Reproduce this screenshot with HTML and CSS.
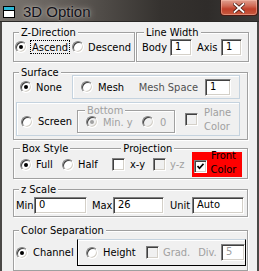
FILE: index.html
```html
<!DOCTYPE html>
<html>
<head>
<meta charset="utf-8">
<title>3D Option</title>
<link rel="stylesheet" href="styles.css">
</head>
<body>
<div class="window">
  <div class="titlebar">
    <svg class="appicon" width="12" height="12" viewBox="0 0 12 12">
      <rect x="0.5" y="0.5" width="11" height="11" fill="#fff" stroke="#000"/>
      <rect x="1" y="1" width="10" height="3" fill="#2bb7d6"/>
      <line x1="1" y1="4.5" x2="11" y2="4.5" stroke="#000"/>
    </svg>
    <span class="title">3D Option</span>
    <div class="close">
      <svg width="12" height="10" viewBox="0 0 12 10">
        <path d="M1.5 1 L10.5 9 M10.5 1 L1.5 9" stroke="#4a1a10" stroke-width="3.4" stroke-linecap="square"/>
        <path d="M1.5 1 L10.5 9 M10.5 1 L1.5 9" stroke="#fff" stroke-width="1.8" stroke-linecap="square"/>
      </svg>
    </div>
  </div>

  <div class="client">
    <div class="toprow">
      <div class="group g-zdir">
        <div class="gtitle">Z-Direction</div>
        <div class="row zrow">
          <span class="radio on"></span><span class="lbl focus">Ascend</span>
          <span class="radio r-desc"></span><span class="lbl l-desc">Descend</span>
        </div>
      </div>
      <div class="group g-line">
        <div class="gtitle t-line">Line Width</div>
        <div class="row lrow">
          <span class="lbl l-body">Body</span><span class="edit e-body">1</span>
          <span class="lbl l-axis">Axis</span><span class="edit e-axis">1</span>
        </div>
      </div>
    </div>

    <div class="group g-surface">
      <div class="gtitle">Surface</div>
      <div class="row srow1">
        <span class="radio on r-none"></span><span class="lbl l-none">None</span>
        <div class="pane mesh">
          <span class="radio"></span><span class="lbl l-mesh">Mesh</span>
          <span class="lbl dim l-space">Mesh Space</span><span class="edit e-space">1</span>
        </div>
      </div>
      <div class="pane screen">
        <span class="radio r-screen"></span><span class="lbl l-screen">Screen</span>
        <div class="group g-bottom">
          <div class="gtitle t-bottom off">Bottom</div>
          <div class="row brow">
            <span class="radio on dis r-min"></span><span class="lbl off l-min">Min. y</span>
            <span class="radio dis r-zero"></span><span class="lbl off l-zero">0</span>
          </div>
        </div>
        <span class="check dis c-plane"></span><span class="lbl off two l-plane">Plane<br>Color</span>
      </div>
    </div>

    <div class="group g-box">
      <div class="titles">
        <div class="gtitle t-box">Box Style</div>
        <div class="gtitle t-proj">Projection</div>
      </div>
      <div class="row boxrow">
        <span class="radio on r-full"></span><span class="lbl l-full">Full</span>
        <span class="radio r-half"></span><span class="lbl l-half">Half</span>
        <span class="check c-xy"></span><span class="lbl l-xy">x-y</span>
        <span class="check dis c-yz"></span><span class="lbl off l-yz">y-z</span>
        <div class="front">
          <span class="check on c-front">
            <svg width="7" height="7" viewBox="0 0 7 7"><path d="M0.5 3 L2.5 5.2 L6.5 0.8" fill="none" stroke="#000" stroke-width="1.7"/></svg>
          </span>
          <span class="lbl two l-front">Front<br>Color</span>
        </div>
      </div>
    </div>

    <div class="group g-z">
      <div class="gtitle">z Scale</div>
      <div class="row zsrow">
        <span class="lbl l-min2">Min</span><span class="edit e-min">0</span>
        <span class="lbl l-max">Max</span><span class="edit e-max">26</span>
        <span class="lbl l-unit">Unit</span><span class="edit e-unit">Auto</span>
      </div>
    </div>

    <div class="group g-sep">
      <div class="gtitle">Color Separation</div>
      <div class="row seprow">
        <span class="radio on r-chan"></span><span class="lbl l-chan">Channel</span>
        <div class="pane height">
          <span class="radio"></span><span class="lbl l-height">Height</span>
          <span class="check dis c-grad"></span><span class="lbl off l-grad">Grad.</span>
          <span class="lbl off l-div">Div.</span><span class="edit off e-div">5</span>
        </div>
      </div>
    </div>
  </div>
</div>
</body>
</html>
```

FILE: styles.css
```css
* { box-sizing: border-box; }
html, body { margin: 0; padding: 0; background: #f0f0f0; }

.window {
  width: 259px;
  height: 271px;
  overflow: hidden;
  background: #f0f0f0;
  font-family: "DejaVu Sans Condensed", "Liberation Sans", Arial, sans-serif;
  font-size: 11px;
  color: #000;
}

/* ---------- title bar ---------- */
.titlebar {
  height: 22px;
  display: flex;
  align-items: flex-start;
  background: linear-gradient(90deg, #7a7570 0%, #6a6560 18%, #4f4b47 40%, #35322f 62%, #2f2c2a 80%, #3c3a38 100%);
  border-bottom: 1px solid #2a2826;
}
.appicon { margin: 6px 0 0 3px; flex: none; }
.title {
  margin: 3px 0 0 8px;
  font-family: "Liberation Sans", Arial, sans-serif;
  font-size: 15px;
  line-height: 18px;
  color: #101018;
  text-shadow: 0 0 6px rgba(230, 225, 215, 0.75), 0 0 2px rgba(230, 225, 215, 0.6);
}
.close {
  margin-left: auto;
  margin-right: 1px;
  width: 38px;
  height: 16px;
  display: flex;
  align-items: center;
  justify-content: center;
  border: 1px solid #4a1a14;
  border-top: none;
  border-radius: 0 0 4px 4px;
  background: linear-gradient(180deg, #e0a090 0%, #d06a55 40%, #c0402a 60%, #c85a40 100%);
  box-shadow: inset 0 0 0 1px rgba(255, 200, 180, 0.45);
}

/* ---------- client ---------- */
.client {
  height: 249px;
  border-left: 2px solid #4a4846;
  border-right: 2px solid #4a4846;
  padding: 10px 0 0 11px;
}

.group {
  border: 1px solid #a0a0a0;
  box-shadow: inset 1px 1px 0 #fff, 1px 1px 0 #fff;
}
.gtitle {
  width: fit-content;
  height: 13px;
  line-height: 13px;
  margin: -7px 0 0 5px;
  padding: 0 2px;
  background: #f0f0f0;
  white-space: nowrap;
}

.row { display: flex; align-items: center; }
.lbl { white-space: nowrap; line-height: 13px; }
.two { line-height: 14px; white-space: normal; }
.off { color: #a0a0a0; }
.dim { color: #505050; }

/* radio */
.radio {
  flex: none;
  position: relative;
  width: 12px;
  height: 12px;
  border-radius: 50%;
  border: 1px solid;
  border-color: #808080 #fff #fff #808080;
  background: #fff;
  box-shadow: inset 1px 1px 0 #404040, inset -1px -1px 0 #d4d0c8;
}
.radio.on::after {
  content: "";
  position: absolute;
  left: 3px;
  top: 3px;
  width: 4px;
  height: 4px;
  border-radius: 50%;
  background: #000;
}
.radio.dis { background: #f0f0f0; }
.radio.dis.on::after { background: #a0a0a0; }

/* checkbox */
.check {
  flex: none;
  width: 13px;
  height: 13px;
  display: flex;
  align-items: center;
  justify-content: center;
  border: 1px solid;
  border-color: #808080 #fff #fff #808080;
  background: #fff;
  box-shadow: inset 1px 1px 0 #404040, inset -1px -1px 0 #d4d0c8;
}
.check.dis { background: #f0f0f0; }

/* edit */
.edit {
  flex: none;
  height: 17px;
  line-height: 14px;
  padding-left: 4px;
  border: 1px solid;
  border-color: #808080 #fff #fff #808080;
  background: #fff;
  box-shadow: inset 1px 1px 0 #404040, inset -1px -1px 0 #d4d0c8;
  white-space: nowrap;
}
.edit.off { color: #a0a0a0; }

/* pane (untitled inner frame) */
.pane {
  display: flex;
  align-items: center;
  border: 1px solid #c5d3df;
  box-shadow: inset 1px 1px 0 #fff;
}

/* ---------- top row ---------- */
.toprow { display: flex; gap: 1px; }
.g-zdir { width: 122px; padding-bottom: 7px; }
.g-line { width: 113px; padding-bottom: 5px; }
.t-line { margin-left: 7px; }

.zrow { height: 14px; margin-top: 1px; padding-left: 1px; }
.focus { margin-left: 3px; padding: 0 1px; border: 1px dotted #000; height: 14px; }
.r-desc { margin-left: 2px; }
.l-desc { margin-left: 4px; }

.lrow { height: 17px; }
.l-body { margin-left: 5px; width: 28px; }
.e-body { width: 22px; }
.l-axis { margin-left: 5px; width: 24px; }
.e-axis { width: 21px; }

/* ---------- surface ---------- */
.g-surface { width: 235px; margin-top: 10px; padding-bottom: 3px; }
.srow1 { margin-top: -4px; height: 24px; }
.r-none { margin-left: 6px; }
.l-none { margin-left: 4px; width: 36px; }
.mesh { width: 168px; height: 24px; padding: 0 8px; }
.l-mesh { margin-left: 5px; }
.l-space { margin-left: auto; margin-right: 7px; }
.e-space { width: 26px; }

.screen {
  width: 224px;
  height: 34px;
  margin: 3px 0 0 2px;
  padding: 7px 0 2px 4px;
}
.l-screen { margin-left: 5px; width: 39px; }
.g-bottom { width: 98px; height: 23px; padding-bottom: 3px; }
.t-bottom { margin-left: 7px; }
.brow { height: 14px; margin-top: -2px; padding-left: 8px; }
.l-min { margin-left: 5px; width: 39px; }
.l-zero { margin-left: 6px; }
.c-plane { margin-left: 10px; margin-bottom: 4px; }
.l-plane { margin-left: 6px; margin-bottom: 4px; }

/* ---------- box style ---------- */
.g-box { width: 235px; margin-top: 8px; padding-bottom: 1px; }
.titles { display: flex; }
.t-box { margin-left: 6px; }
.t-proj { margin-left: 51px; }
.boxrow { height: 25px; margin-top: -3px; }
.r-full { margin-left: 6px; }
.l-full { margin-left: 4px; width: 17px; }
.r-half { margin-left: 9px; }
.l-half { margin-left: 4px; width: 20px; }
.c-xy { margin-left: 14px; }
.l-xy { margin-left: 5px; width: 13px; }
.c-yz { margin-left: 10px; }
.l-yz { margin-left: 4px; width: 14px; }
.front {
  margin-left: 8px;
  width: 50px;
  height: 25px;
  background: #ff0000;
  display: flex;
  align-items: center;
  padding-left: 2px;
}
.c-front { margin-top: 3px; }
.l-front { flex: 1; text-align: center; margin-top: -3px; padding-right: 2px; }

/* ---------- z scale ---------- */
.g-z { width: 235px; margin-top: 10px; padding-bottom: 2px; }
.zsrow { height: 17px; margin-top: 1px; padding-left: 2px; }
.l-min2 { width: 18px; }
.e-min { width: 53px; }
.l-max { margin-left: 5px; width: 21px; }
.e-max { width: 51px; }
.l-unit { margin-left: 6px; width: 22px; }
.e-unit { width: 52px; }

/* ---------- color separation ---------- */
.g-sep { width: 235px; margin-top: 13px; padding-bottom: 4px; }
.seprow { margin-top: 2px; height: 27px; }
.r-chan { margin-left: 2px; }
.l-chan { margin-left: 5px; width: 44px; }
.height {
  width: 169px;
  height: 27px;
  padding-left: 8px;
  border: 1px solid #000;
  border-top-color: #c5d3df;
  box-shadow: inset 1px 1px 0 #fff;
}
.l-height { margin-left: 5px; width: 40px; }
.c-grad { margin-left: 5px; }
.l-grad { margin-left: 4px; width: 28px; }
.l-div { margin-left: 8px; width: 24px; }
.e-div { width: 24px; }
```
